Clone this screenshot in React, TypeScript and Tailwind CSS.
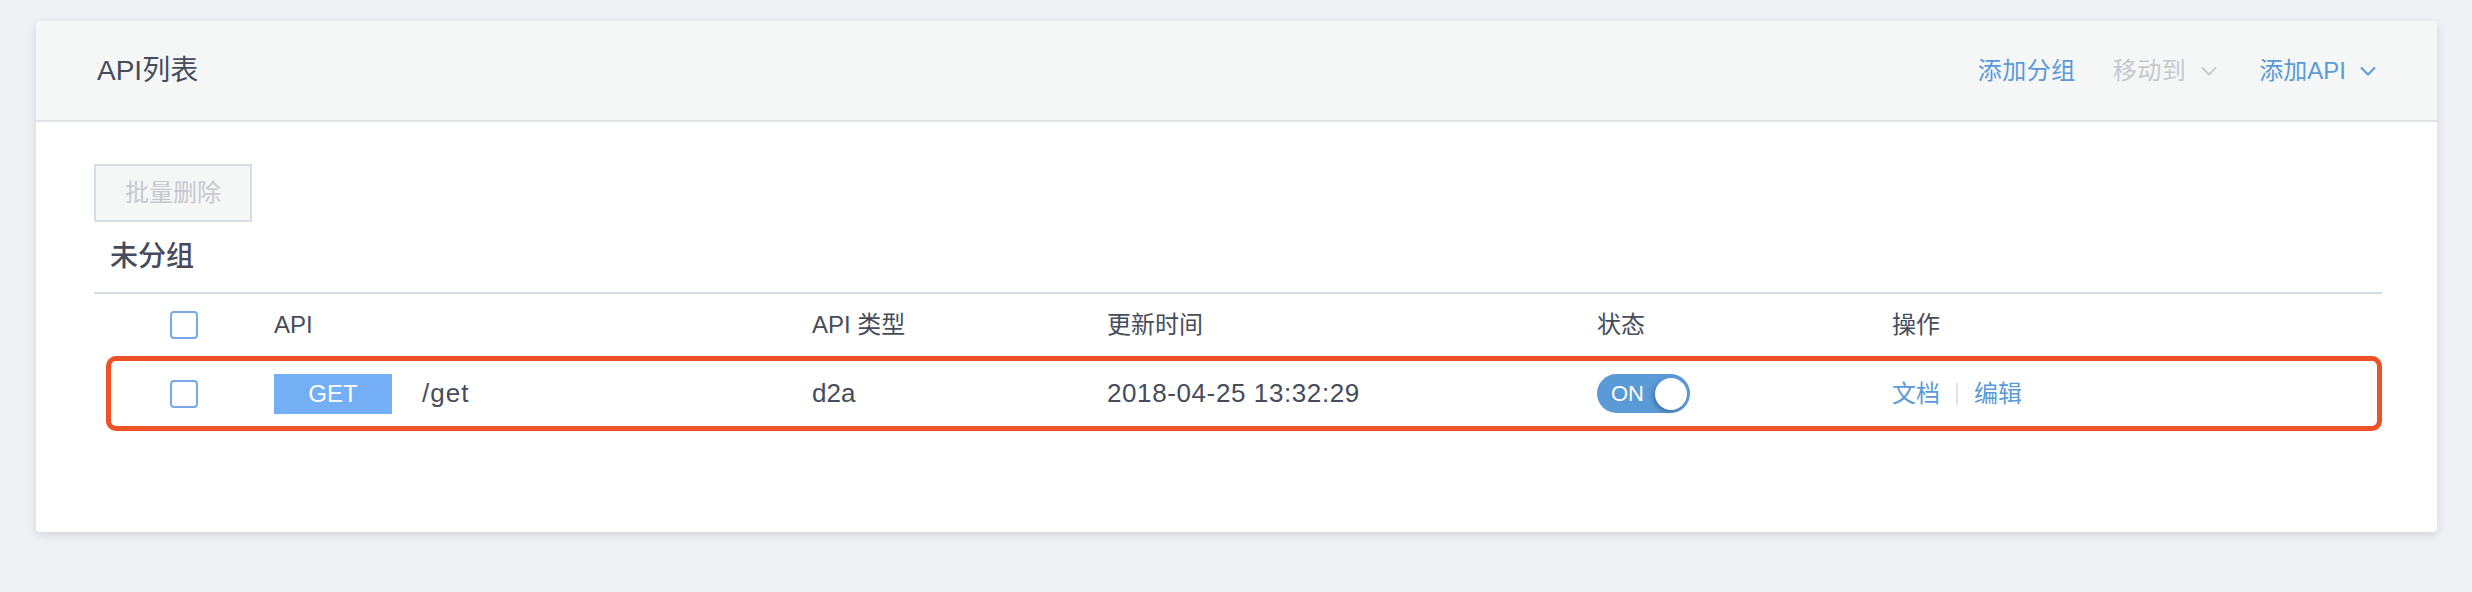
import { useState } from 'react';

const FONT = { fontFamily: '"Liberation Sans", "Noto Sans CJK SC", sans-serif' };

function Chevron({ color }: { color: string }) {
  return (
    <svg width="16" height="10" viewBox="0 0 16 10" fill="none">
      <polyline points="1,1.5 8,8.5 15,1.5" stroke={color} strokeWidth="2" strokeLinejoin="round" />
    </svg>
  );
}

function Checkbox() {
  return <span className="block w-[28px] h-[28px] rounded-[4px] border-2 border-[#78a8e8] bg-white" />;
}

function Toggle({ on }: { on: boolean }) {
  return (
    <span className="relative flex items-center w-[93px] h-[39px] rounded-full bg-[#5a9ad6]">
      <span className="pl-[14px] text-[22px] leading-none text-white">{on ? 'ON' : 'OFF'}</span>
      <span className="absolute right-[3px] top-[3.5px] w-[32px] h-[32px] rounded-full bg-white shadow-[-2px_2px_4px_rgba(0,0,0,0.25)]" />
    </span>
  );
}

export default function App() {
  const [enabled] = useState(true);

  return (
    <div className="min-h-[592px] bg-[#f0f1f5] pt-[21px] pl-[36px]" style={FONT}>
      <div className="w-[2401px] h-[511px] bg-white rounded-[4px] shadow-[0_3px_10px_rgba(30,40,60,0.14)] overflow-hidden">
        {/* header */}
        <div className="h-[101px] flex items-center justify-between pl-[61px] pr-[61px] bg-[#f5f7f7] border-b-2 border-[#dfe3e8]">
          <h1 className="text-[28px] text-[#464c5b]">API列表</h1>
          <div className="flex items-center text-[24px]">
            <span className="text-[#5b9ad8] tracking-[0.5px]">添加分组</span>
            <span className="ml-[37px] flex items-center text-[#c5c8ce] tracking-[0.5px]">
              移动到
              <span className="ml-[15px]">
                <Chevron color="#c8ccd2" />
              </span>
            </span>
            <span className="ml-[42px] flex items-center text-[#5b9ad8]">
              添加API
              <span className="ml-[14px]">
                <Chevron color="#5b9ad8" />
              </span>
            </span>
          </div>
        </div>

        {/* body */}
        <div className="pl-[58px] pr-[55px] pt-[42px]">
          <button className="w-[158px] h-[58px] border-2 border-[#d7dde4] bg-[#f5f7f7] text-[24px] text-[#c5c8ce]">
            批量删除
          </button>
          <div className="h-[70px] flex items-center pl-[16px] text-[28px] font-medium text-[#464c5b]">未分组</div>

          <div className="border-t-2 border-[#d7dde4]">
            <div className="grid grid-cols-[180px_538px_295px_490px_295px_1fr] items-center h-[62px] text-[24px] text-[#464c5b]">
              <div className="pl-[76px]">
                <Checkbox />
              </div>
              <div>API</div>
              <div>API 类型</div>
              <div>更新时间</div>
              <div>状态</div>
              <div>操作</div>
            </div>

            <div className="ml-[12px] h-[75px] border-[5px] border-[#ee5125] rounded-[10px] grid grid-cols-[163px_538px_295px_490px_295px_1fr] items-center text-[26px] text-[#464c5b]">
              <div className="pl-[59px]">
                <Checkbox />
              </div>
              <div className="flex items-center">
                <span className="w-[118px] h-[40px] flex items-center justify-center bg-[#74aef5] text-white text-[24px]">
                  GET
                </span>
                <span className="ml-[30px] tracking-[1px]">/get</span>
              </div>
              <div>d2a</div>
              <div className="tracking-[0.6px]">2018-04-25 13:32:29</div>
              <div>
                <Toggle on={enabled} />
              </div>
              <div className="flex items-center text-[24px] text-[#5b9ad8]">
                <span>文档</span>
                <span className="mx-[16px] w-[2px] h-[22px] bg-[#e1e5ea]" />
                <span>编辑</span>
              </div>
            </div>
          </div>
        </div>
      </div>
    </div>
  );
}
